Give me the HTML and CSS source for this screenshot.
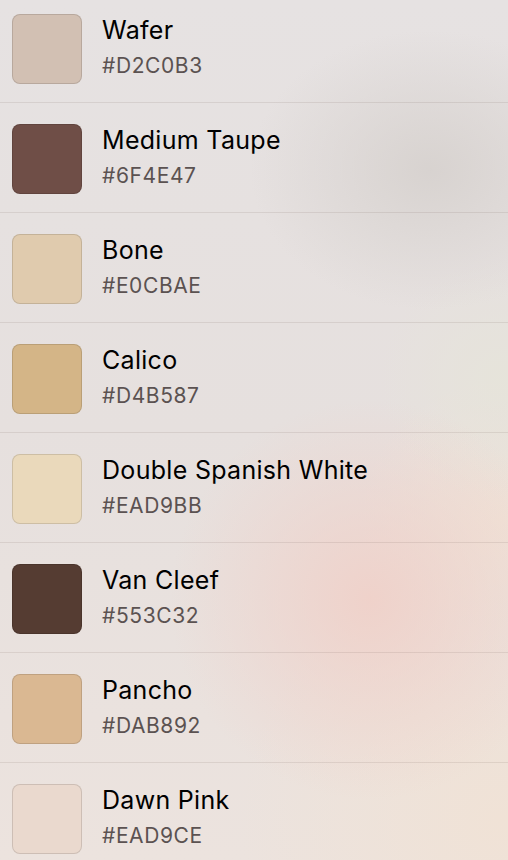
FILE: index.html
```html
<!DOCTYPE html>
<html>
<head>
<meta charset="utf-8">
<link rel="stylesheet" href="styles.css">
</head>
<body>
<ul class="list">
  <li class="row"><span class="swatch" style="background:#D2C0B3"></span><div class="info"><div class="name">Wafer</div><div class="hex">#D2C0B3</div></div></li>
  <li class="row"><span class="swatch" style="background:#6F4E47"></span><div class="info"><div class="name">Medium Taupe</div><div class="hex">#6F4E47</div></div></li>
  <li class="row"><span class="swatch" style="background:#E0CBAE"></span><div class="info"><div class="name">Bone</div><div class="hex">#E0CBAE</div></div></li>
  <li class="row"><span class="swatch" style="background:#D4B587"></span><div class="info"><div class="name">Calico</div><div class="hex">#D4B587</div></div></li>
  <li class="row"><span class="swatch" style="background:#EAD9BB"></span><div class="info"><div class="name">Double Spanish White</div><div class="hex">#EAD9BB</div></div></li>
  <li class="row"><span class="swatch" style="background:#553C32"></span><div class="info"><div class="name">Van Cleef</div><div class="hex">#553C32</div></div></li>
  <li class="row"><span class="swatch" style="background:#DAB892"></span><div class="info"><div class="name">Pancho</div><div class="hex">#DAB892</div></div></li>
  <li class="row"><span class="swatch" style="background:#EAD9CE"></span><div class="info"><div class="name">Dawn Pink</div><div class="hex">#EAD9CE</div></div></li>
</ul>
</body>
</html>
```
FILE: styles.css
```css
html, body {
  margin: 0;
  padding: 0;
  height: 100%;
  overflow: hidden;
}
body {
  font-family: Inter, "Noto Sans", sans-serif;
  background-color: #e6e1e0;
  background-image:
    radial-gradient(circle at 370px 600px, rgba(240, 208, 200, 0.9) 0, rgba(240, 208, 200, 0) 200px),
    radial-gradient(ellipse 180px 140px at 430px 170px, rgba(214, 209, 206, 0.9) 0, rgba(214, 209, 206, 0) 100%),
    radial-gradient(circle at 500px 380px, rgba(230, 228, 218, 0.9) 0, rgba(230, 228, 218, 0) 120px),
    radial-gradient(circle at 500px 520px, rgba(240, 226, 214, 0.9) 0, rgba(240, 226, 214, 0) 140px),
    radial-gradient(circle at 500px 820px, rgba(240, 226, 214, 1) 0, rgba(240, 226, 214, 0) 260px),
    linear-gradient(180deg, #e6e2e2 0%, #e6e0de 50%, #ece3de 100%);
}
.list {
  list-style: none;
  margin: -7px 0 0 0;
  padding: 0;
}
.row {
  display: flex;
  align-items: flex-start;
  height: 109px;
  border-bottom: 1px solid rgba(120, 100, 95, 0.14);
  padding: 0 12px;
  box-sizing: content-box;
}
.swatch {
  flex: none;
  width: 68px;
  height: 68px;
  margin-top: 21px;
  border-radius: 8px;
  border: 1px solid rgba(0, 0, 0, 0.12);
}
.info {
  margin-left: 20px;
  margin-top: 22px;
}
.name {
  font-size: 25px;
  line-height: 30px;
  letter-spacing: 0.3px;
  color: #000;
}
.hex {
  font-size: 21px;
  line-height: 26px;
  letter-spacing: 0.6px;
  margin-top: 8px;
  color: #5b5251;
}
```
